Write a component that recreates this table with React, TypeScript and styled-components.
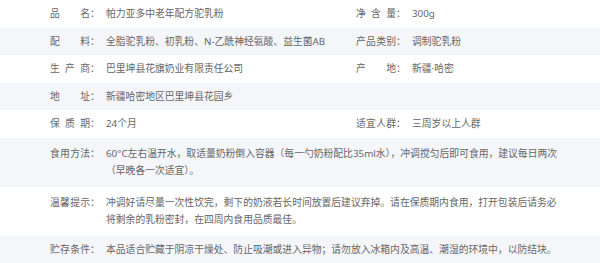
import React, { FC, ReactElement } from "react";
import styled, { createGlobalStyle } from "styled-components";

interface iField {
  label: string;
  value: string;
}

interface iRow {
  fields: iField[];
  tall?: boolean;
}

const rows: iRow[] = [
  {
    fields: [
      { label: "品名", value: "帕力亚多中老年配方驼乳粉" },
      { label: "净含量", value: "300g" },
    ],
  },
  {
    fields: [
      { label: "配料", value: "全脂驼乳粉、初乳粉、N-乙酰神经氨酸、益生菌AB" },
      { label: "产品类别", value: "调制驼乳粉" },
    ],
  },
  {
    fields: [
      { label: "生产商", value: "巴里坤县花旗奶业有限责任公司" },
      { label: "产地", value: "新疆·哈密" },
    ],
  },
  { fields: [{ label: "地址", value: "新疆哈密地区巴里坤县花园乡" }] },
  {
    fields: [
      { label: "保质期", value: "24个月" },
      { label: "适宜人群", value: "三周岁以上人群" },
    ],
  },
  {
    tall: true,
    fields: [
      {
        label: "食用方法",
        value:
          "60°C左右温开水，取适量奶粉倒入容器（每一勺奶粉配比35ml水），冲调搅匀后即可食用，建议每日两次（早晚各一次适宜）。",
      },
    ],
  },
  {
    tall: true,
    fields: [
      {
        label: "温馨提示",
        value:
          "冲调好请尽量一次性饮完，剩下的奶液若长时间放置后建议弃掉。请在保质期内食用，打开包装后请务必将剩余的乳粉密封，在四周内食用品质最佳。",
      },
    ],
  },
  {
    fields: [
      {
        label: "贮存条件",
        value: "本品适合贮藏于阴凉干燥处、防止吸潮或进入异物；请勿放入冰箱内及高温、潮湿的环境中，以防结块。",
      },
    ],
  },
];

const App: FC = (): ReactElement => {
  return (
    <>
      <GlobalStyle />
      <Table>
        {rows.map((r, i) => (
          <Row key={i} $alt={i % 2 === 1} $tall={r.tall} $single={r.fields.length === 1}>
            {r.fields.map((f) => (
              <Cell key={f.label}>
                <Label>
                  <LabelText>{f.label}</LabelText>
                  <Colon>：</Colon>
                </Label>
                <Value>{f.value}</Value>
              </Cell>
            ))}
          </Row>
        ))}
      </Table>
    </>
  );
};

export default App;

const GlobalStyle = createGlobalStyle`
  html, body {
    margin: 0;
    padding: 0;
    background: #ffffff;
  }
  body {
    font-family: "Noto Sans", "Noto Sans CJK SC", sans-serif;
  }
`;

const Table = styled.div`
  width: 600px;
  height: 263px;
  overflow: hidden;
  display: flex;
  flex-direction: column;
`;

const Row = styled.div<{ $alt: boolean; $tall?: boolean; $single: boolean }>`
  display: grid;
  grid-template-columns: ${(p) => (p.$single ? "1fr" : "306px 1fr")};
  padding: ${(p) => (p.$tall ? "7px" : "5px")} 38px
    ${(p) => (p.$tall ? "7px" : "5px")} 50px;
  background: ${(p) => (p.$alt ? "#f5f6fa" : "#ffffff")};
  font-size: 9.8px;
  line-height: 17.5px;
  color: #666666;
`;

const Cell = styled.div`
  display: flex;
  flex-direction: row;
  align-items: flex-start;
  gap: 6px;
`;

const Label = styled.div`
  display: flex;
  flex-direction: row;
  flex: 0 0 auto;
  width: 50px;
`;

const LabelText = styled.span`
  display: inline-block;
  width: 40px;
  text-align: justify;
  text-align-last: justify;
`;

const Colon = styled.span`
  display: inline-block;
  width: 10px;
`;

const Value = styled.div`
  flex: 1;
  min-width: 0;
`;
